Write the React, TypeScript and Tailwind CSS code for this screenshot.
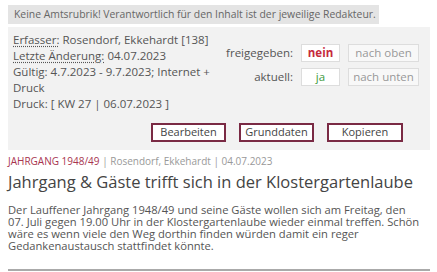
export default function App() {
  return (
    <div className="w-[437px] h-[272px] bg-white px-[8px] pt-[5px] font-['Open_Sans',sans-serif] text-[#555] overflow-hidden">
      <div className="w-fit bg-[#e4e4e4] pl-[6px] pr-[3px] h-[19px] leading-[19px] text-[10.4px] text-[#666]">
        Keine Amtsrubrik! Verantwortlich für den Inhalt ist der jeweilige Redakteur.
      </div>

      <div className="mt-[3px] w-[422px] bg-[#f2f2f2] pl-[5px] pr-[27px] pt-[5px] pb-[8px]">
        <div className="flex items-start">
          <div className="w-[202px] text-[11.5px] leading-[16px]">
            <div>
              <span className="underline decoration-dotted underline-offset-2">Erfasser:</span> Rosendorf, Ekkehardt [138]
            </div>
            <div>
              <span className="underline decoration-dotted underline-offset-2">Letzte Änderung:</span> 04.07.2023
            </div>
            <div>Gültig: 4.7.2023 - 9.7.2023; Internet + Druck</div>
            <div>Druck: [ KW 27 | 06.07.2023 ]</div>
          </div>
          <div className="ml-auto mr-[-16px] mt-[12px] grid grid-cols-[auto_39px_71px] gap-x-[8px] gap-y-[6px] items-center text-[11.5px]">
            <div className="text-right">freigegeben:</div>
            <div className="h-[18px] border border-[#ddd] bg-white flex items-center justify-center font-bold text-[#c62a3c]">nein</div>
            <div className="h-[18px] border border-[#ddd] bg-[#f8f8f8] flex items-center justify-center text-[#999]">nach oben</div>
            <div className="text-right">aktuell:</div>
            <div className="h-[18px] border border-[#ddd] bg-white flex items-center justify-center text-[#3d9a3d]">ja</div>
            <div className="h-[18px] border border-[#ddd] bg-[#f8f8f8] flex items-center justify-center text-[#999]">nach unten</div>
          </div>
        </div>
        <div className="mt-[11px] flex justify-end gap-[13px] text-[11px] text-[#444]">
          <div className="w-[75px] h-[19px] border-2 border-[#7a2a44] bg-white flex items-center justify-center">Bearbeiten</div>
          <div className="w-[75px] h-[19px] border-2 border-[#7a2a44] bg-white flex items-center justify-center">Grunddaten</div>
          <div className="w-[76px] h-[19px] border-2 border-[#7a2a44] bg-white flex items-center justify-center">Kopieren</div>
        </div>
      </div>

      <div className="mt-[4px] text-[10px] leading-[14px] text-[#999]">
        <span className="text-[#a8354f]">JAHRGANG 1948/49</span> | Rosendorf, Ekkehardt | 04.07.2023
      </div>
      <h1 className="mt-[3px] text-[16.5px] leading-[22px] text-[#444]">Jahrgang &amp; Gäste trifft sich in der Klostergartenlaube</h1>
      <p className="mt-[11px] text-[11.2px] leading-[12px] text-[#555] whitespace-nowrap">
        Der Lauffener Jahrgang 1948/49 und seine Gäste wollen sich am Freitag, den
        <br />
        07. Juli gegen 19.00 Uhr in der Klostergartenlaube wieder einmal treffen. Schön
        <br />
        wäre es wenn viele den Weg dorthin finden würden damit ein reger
        <br />
        Gedankenaustausch stattfindet könnte.
      </p>
      <div className="mt-[17px] w-[422px] border-t-2 border-[#aaa]" />
    </div>
  );
}
